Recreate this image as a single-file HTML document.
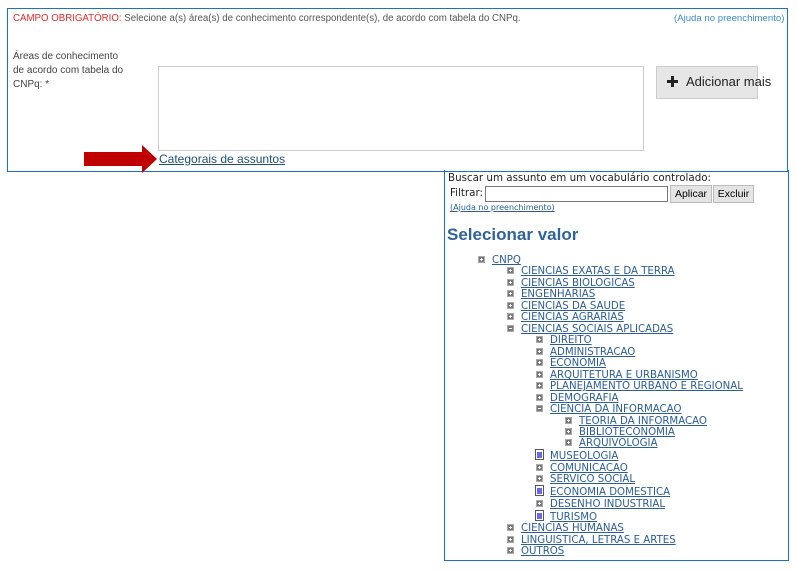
<!DOCTYPE html><html><head><meta charset="utf-8"><style>
body{margin:0;width:796px;height:571px;background:#fff;position:relative;overflow:hidden;font-family:"Liberation Sans",Arial,sans-serif}
.a{position:absolute;white-space:nowrap}
.t{font-family:"DejaVu Sans",Verdana,sans-serif;font-size:10.2px;color:#2a5d99;text-decoration:underline;line-height:12px}
.ic{position:absolute;width:7px;height:7px;background:#777;border:1px solid #aaa;box-sizing:border-box}
.ic:after{content:"";position:absolute;left:1px;top:2px;width:3px;height:1px;background:#fff}
.pl:before{content:"";position:absolute;left:2px;top:1px;width:1px;height:3px;background:#fff}
.pg{position:absolute;width:9px;height:11px;background:#fff;border:1px solid #556;box-sizing:border-box}
.pg:after{content:"";position:absolute;left:1px;top:2px;width:5px;height:6px;background:#6a6ae0}
</style></head><body>
<div class="a" style="left:7px;top:8px;width:779px;height:162px;border:1px solid #1a72c4"></div>
<div class="a" style="left:13px;top:13px;font-size:9.7px;color:#555"><span style="color:#e82c2c">CAMPO OBRIGATÓRIO:</span> Selecione a(s) área(s) de conhecimento correspondente(s), de acordo com tabela do CNPq.</div>
<div class="a" style="left:674px;top:13px;font-size:9.6px;color:#3b8ad0">(Ajuda no preenchimento)</div>
<div class="a" style="left:13px;top:50px;font-size:10px;color:#444;line-height:14px">Áreas de conhecimento<br>de acordo com tabela do<br>CNPq: *</div>
<div class="a" style="left:158px;top:66px;width:484px;height:83px;border:1px solid #ccc"></div>
<div class="a" style="left:656px;top:66px;width:100px;height:31px;background:#e6e6e6;border:1px solid #ccc"></div>
<svg class="a" style="left:667px;top:76px" width="11" height="11"><path d="M5.5 0v11M0 5.5h11" stroke="#222" stroke-width="3"/></svg>
<div class="a" style="left:686px;top:74px;font-size:13px;color:#222">Adicionar mais</div>
<svg class="a" style="left:84px;top:144px" width="74" height="30"><polygon points="0,8 58,8 58,1 73,15 58,29 58,22 0,22" fill="#c00000"/></svg>
<div class="a" style="left:159px;top:152px;font-size:12px;color:#1e4f78;text-decoration:underline">Categorais de assuntos</div>
<div class="a" style="left:444px;top:170px;width:343px;height:390px;border:1px solid #1a72c4;border-top:none"></div>
<div class="a" style="left:448px;top:172px;font-family:'DejaVu Sans',sans-serif;font-size:10.3px;color:#222">Buscar um assunto em um vocabulário controlado:</div>
<div class="a" style="left:450px;top:187px;font-family:'DejaVu Sans',sans-serif;font-size:10.3px;color:#222">Filtrar:</div>
<div class="a" style="left:485px;top:186px;width:181px;height:14px;border:1px solid #777"></div>
<div class="a" style="left:670px;top:185px;width:40px;height:16px;background:#e4e4e4;border:1px solid #bbb;font-size:10.5px;text-align:center;line-height:16px">Aplicar</div>
<div class="a" style="left:713px;top:185px;width:39px;height:16px;background:#e4e4e4;border:1px solid #bbb;font-size:10.5px;text-align:center;line-height:16px">Excluir</div>
<div class="a" style="left:450px;top:203px;font-family:'DejaVu Sans',sans-serif;font-size:8px;color:#2a5d99;text-decoration:underline">(Ajuda no preenchimento)</div>
<div class="a" style="left:447px;top:225px;font-size:17px;font-weight:bold;color:#2f6499">Selecionar valor</div>
<div id="tree"></div>
<script>
var r=[[0,260,'CNPQ','p'],[1,271,'CIENCIAS EXATAS E DA TERRA','p'],[1,283,'CIENCIAS BIOLOGICAS','p'],[1,294,'ENGENHARIAS','p'],[1,306,'CIENCIAS DA SAUDE','p'],[1,317,'CIENCIAS AGRARIAS','p'],[1,329,'CIENCIAS SOCIAIS APLICADAS','m'],[2,340,'DIREITO','p'],[2,352,'ADMINISTRACAO','p'],[2,363,'ECONOMIA','p'],[2,375,'ARQUITETURA E URBANISMO','p'],[2,386,'PLANEJAMENTO URBANO E REGIONAL','p'],[2,398,'DEMOGRAFIA','p'],[2,409,'CIENCIA DA INFORMACAO','m'],[3,421,'TEORIA DA INFORMACAO','p'],[3,432,'BIBLIOTECONOMIA','p'],[3,443,'ARQUIVOLOGIA','p'],[2,456,'MUSEOLOGIA','g'],[2,468,'COMUNICACAO','p'],[2,479,'SERVICO SOCIAL','p'],[2,492,'ECONOMIA DOMESTICA','g'],[2,504,'DESENHO INDUSTRIAL','p'],[2,517,'TURISMO','g'],[1,528,'CIENCIAS HUMANAS','p'],[1,540,'LINGUISTICA, LETRAS E ARTES','p'],[1,551,'OUTROS','p']];
var h='';r.forEach(function(e){var ix=478+29*e[0],tx=492+29*e[0];
if(e[3]=='g')h+='<div class="pg" style="left:'+(ix-1)+'px;top:'+(e[1]-7)+'px"></div>';
else h+='<div class="ic '+(e[3]=='p'?'pl':'')+'" style="left:'+ix+'px;top:'+(e[1]-4)+'px"></div>';
h+='<div class="a t" style="left:'+tx+'px;top:'+(e[1]-5)+'px">'+e[2]+'</div>';});
document.getElementById('tree').innerHTML=h;
</script>
</body></html>
